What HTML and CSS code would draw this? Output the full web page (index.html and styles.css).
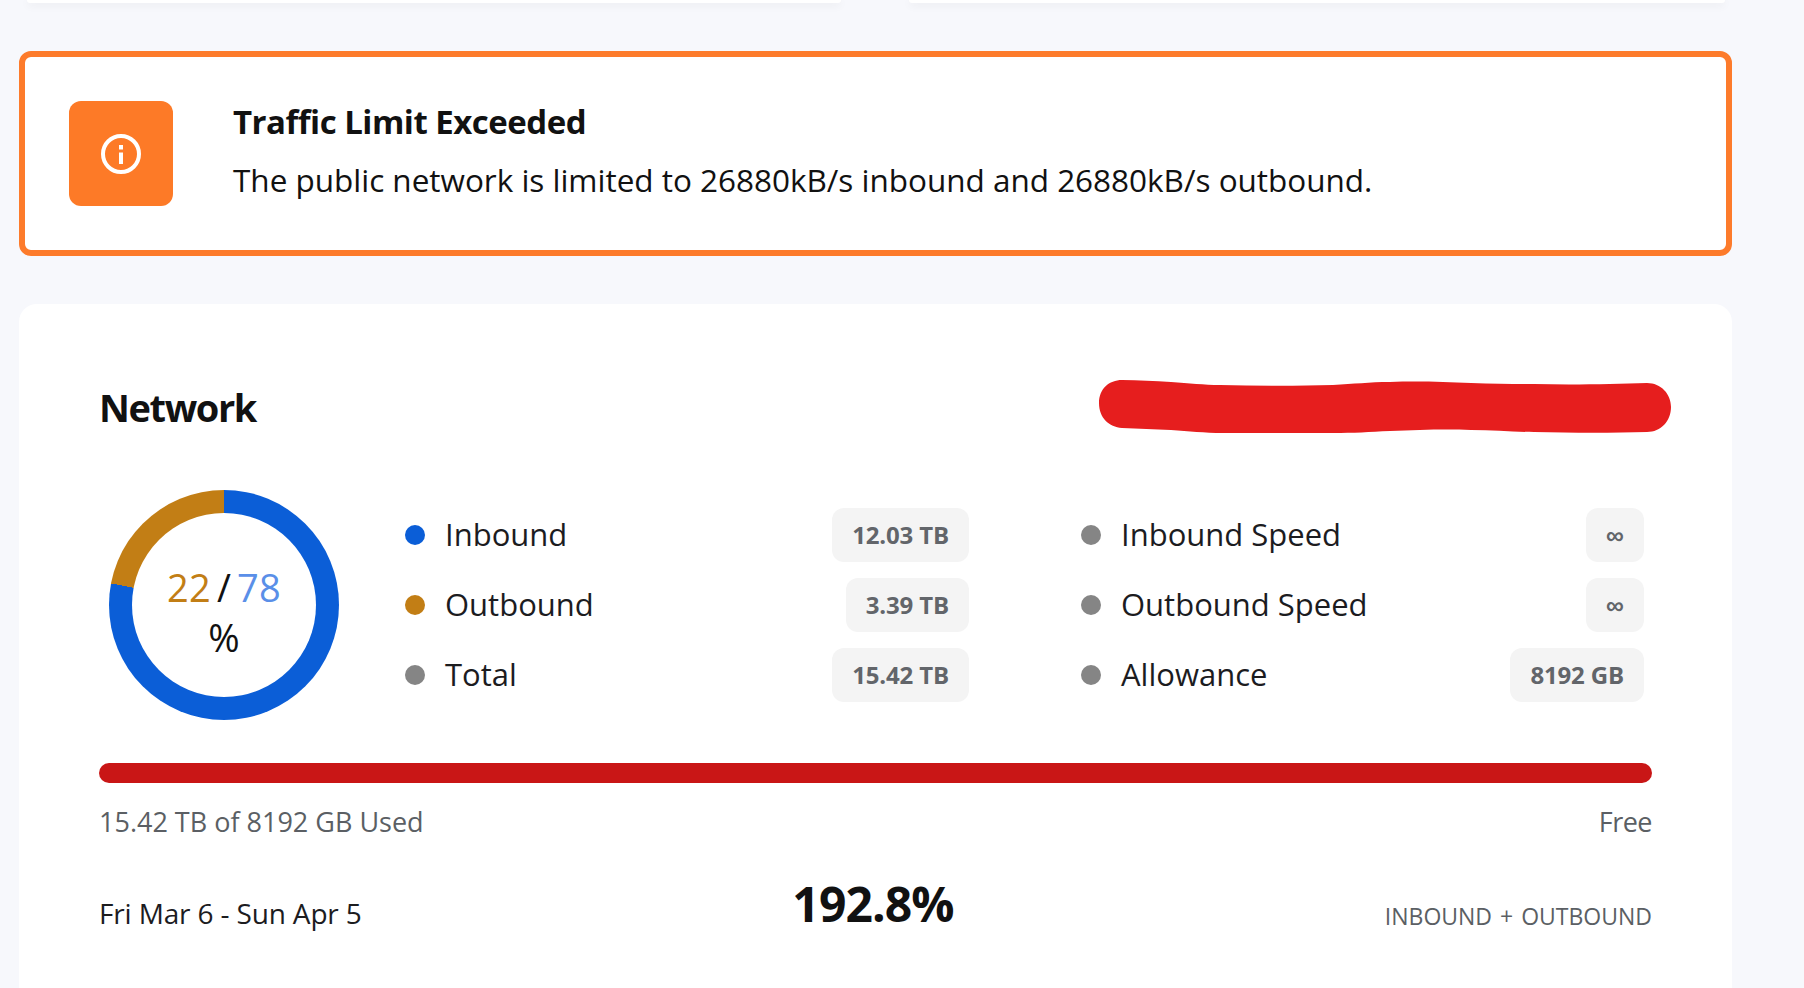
FILE: index.html
```html
<!DOCTYPE html>
<html>
<head>
  <meta name="viewport" content="width=device-width, initial-scale=1.0">
  <meta charset="UTF-8">
  <title>Network</title>
  <link rel="stylesheet" href="styles.css">
</head>
<body>

<div class="top-cards">
  <div class="top-card top-card-left"></div>
  <div class="top-card top-card-right"></div>
</div>

<div class="alert">
  <div class="alert-icon">
    <svg width="40" height="40" viewBox="0 0 40 40" fill="none" stroke="#fff" stroke-width="4">
      <circle cx="20" cy="20" r="18"/>
      <line x1="20" y1="18.5" x2="20" y2="30"/>
      <line x1="20" y1="11" x2="20" y2="15.5"/>
    </svg>
  </div>
  <div class="alert-text">
    <div class="alert-title">Traffic Limit Exceeded</div>
    <div class="alert-body">The public network is limited to 26880kB/s inbound and 26880kB/s outbound.</div>
  </div>
</div>

<div class="card">
  <div class="card-head">
    <h2>Network</h2>
    <svg class="scribble" width="572" height="53" viewBox="0 0 572 53">
      <path fill="#e61e1e" d="M0 23C0 9 10 0 23 0C40 0 55 1 72 2C90 3 105 5 121 5C160 6 200 6 234 5C255 4 270 2 291 2C320 1 345 2 372 3C395 4 415 4 435 4C475 5 515 4 548 3C562 3 572 14 572 27C572 41 562 52 548 52C515 53 475 53 435 52C415 52 395 50 372 50C345 49 320 50 291 51C270 52 255 53 234 53C200 54 160 54 124 53C105 53 90 51 72 50C55 49 40 49 23 48C10 47 0 38 0 23Z"/>
    </svg>
  </div>

  <div class="stats">
    <div class="donut">
      <div class="donut-hole">
        <div class="donut-ratio"><span class="out">22</span><span class="slash">/</span><span class="in">78</span></div>
        <div class="donut-unit">%</div>
      </div>
    </div>

    <div class="legend legend-traffic">
      <div class="legend-row"><span class="dot dot-blue"></span><span class="legend-label">Inbound</span><span class="pill">12.03 TB</span></div>
      <div class="legend-row"><span class="dot dot-gold"></span><span class="legend-label">Outbound</span><span class="pill">3.39 TB</span></div>
      <div class="legend-row"><span class="dot dot-grey"></span><span class="legend-label">Total</span><span class="pill">15.42 TB</span></div>
    </div>

    <div class="legend legend-limits">
      <div class="legend-row"><span class="dot dot-grey"></span><span class="legend-label">Inbound Speed</span><span class="pill pill-inf">∞</span></div>
      <div class="legend-row"><span class="dot dot-grey"></span><span class="legend-label">Outbound Speed</span><span class="pill pill-inf">∞</span></div>
      <div class="legend-row"><span class="dot dot-grey"></span><span class="legend-label">Allowance</span><span class="pill">8192 GB</span></div>
    </div>
  </div>

  <div class="bar"></div>
  <div class="bar-labels">
    <span>15.42 TB of 8192 GB Used</span>
    <span class="bar-free">Free</span>
  </div>

  <div class="usage">
    <span class="usage-dates">Fri Mar 6 - Sun Apr 5</span>
    <span class="usage-percent">192.8%</span>
    <span class="usage-note">INBOUND + OUTBOUND</span>
  </div>
</div>

</body>
</html>
```

FILE: styles.css
```css
html, body {
  height: 988px;
  overflow: hidden;
}

body {
  margin: 0;
  background-color: #f7f8fc;
  color: #111;
  font-family: "Open Sans", "Noto Sans", sans-serif;
}

/* bottoms of the cards scrolled off the top */
.top-cards {
  display: flex;
  gap: 68px;
  height: 3px;
  margin: 0 79px 48px 27px;
}

.top-card {
  height: 3px;
  background: #fff;
  border-radius: 0 0 10px 10px;
  box-shadow: 0 2px 8px rgba(0, 0, 0, 0.09);
}

.top-card-left { width: 814px; }
.top-card-right { width: 816px; }

.alert {
  display: flex;
  align-items: center;
  gap: 60px;
  box-sizing: border-box;
  width: 1713px;
  height: 205px;
  margin-left: 19px;
  padding: 0 44px;
  background: #fff;
  border: 6px solid #fd7b2b;
  border-radius: 12px;
}

.alert-icon {
  display: flex;
  align-items: center;
  justify-content: center;
  flex: none;
  width: 104px;
  height: 105px;
  background: #fd7a27;
  border-radius: 12px;
}

.alert-text {
  padding-bottom: 6px;
}

.alert-title {
  font-size: 33px;
  font-weight: 700;
  line-height: 42px;
  letter-spacing: -0.5px;
  margin-bottom: 16px;
}

.alert-body {
  font-size: 31.5px;
  line-height: 42px;
  letter-spacing: -0.02px;
}

.card {
  box-sizing: border-box;
  width: 1713px;
  min-height: 720px;
  margin: 48px 0 0 19px;
  padding: 76px 80px 0;
  background: #fff;
  border-radius: 18px;
}

.card-head {
  display: flex;
  align-items: center;
  justify-content: space-between;
  height: 53px;
  margin-right: -19px;
}

.card-head h2 {
  margin: 0;
  font-size: 38px;
  font-weight: 700;
  letter-spacing: -1.4px;
}

.stats {
  display: flex;
  align-items: center;
  margin: 57px 0 0 10px;
}

.donut {
  display: flex;
  align-items: center;
  justify-content: center;
  flex: none;
  width: 230px;
  height: 230px;
  border-radius: 50%;
  background: conic-gradient(#0b5ed7 0 78%, #c27e15 78% 100%);
}

.donut-hole {
  display: flex;
  flex-direction: column;
  align-items: center;
  justify-content: center;
  box-sizing: border-box;
  width: 184px;
  height: 184px;
  padding-top: 16px;
  background: #fff;
  border-radius: 50%;
}

.donut-ratio {
  display: flex;
  gap: 6px;
  font-size: 38px;
  line-height: 44px;
  margin-top: -2px;
  letter-spacing: 0.2px;
}

.donut-ratio .out { color: #c27e15; }
.donut-ratio .in { color: #5a8fe8; }

.donut-unit {
  font-size: 38px;
  line-height: 44px;
  margin-top: 6px;
}

.legend {
  display: flex;
  flex-direction: column;
  gap: 16px;
  flex: none;
}

.legend-traffic {
  width: 564px;
  margin-left: 66px;
}

.legend-limits {
  width: 563px;
  margin-left: 112px;
}

.legend-row {
  display: flex;
  align-items: center;
  height: 54px;
}

.dot {
  flex: none;
  width: 20px;
  height: 20px;
  margin-right: 20px;
  border-radius: 50%;
}

.dot-blue { background: #0b5ed7; }
.dot-gold { background: #c27e15; }
.dot-grey { background: #858585; }

.legend-label {
  flex: 1;
  padding-bottom: 2px;
  font-size: 31px;
  color: #1c1c1f;
}

.pill {
  box-sizing: border-box;
  height: 54px;
  padding: 0 20px;
  background: #f4f4f4;
  border-radius: 12px;
  color: #62656a;
  font-size: 24px;
  font-weight: 700;
  line-height: 54px;
  letter-spacing: -0.15px;
}

.pill-inf {
  font-family: "Liberation Sans", sans-serif;
  font-size: 25px;
  width: 58px;
  padding: 0;
  letter-spacing: 0;
  text-align: center;
}

.bar {
  height: 20px;
  margin-top: 43px;
  background: #c91616;
  border-radius: 10px;
}

.bar-labels {
  display: flex;
  justify-content: space-between;
  margin-top: 19px;
  color: #5b5f64;
  font-size: 27px;
  line-height: 40px;
}

.bar-free {
  letter-spacing: -0.5px;
}

.usage {
  display: grid;
  grid-template-columns: 1fr auto 1fr;
  align-items: center;
  margin-top: 29px;
}

.usage-dates {
  font-size: 28px;
  letter-spacing: -0.15px;
  color: #1c1c1f;
  padding-top: 18px;
}

.usage-percent {
  font-size: 48px;
  font-weight: 700;
  letter-spacing: -0.9px;
  margin-right: 5px;
}

.usage-note {
  font-size: 23px;
  word-spacing: 2px;
  text-align: right;
  color: #5b5f64;
  padding-top: 24px;
}
```
